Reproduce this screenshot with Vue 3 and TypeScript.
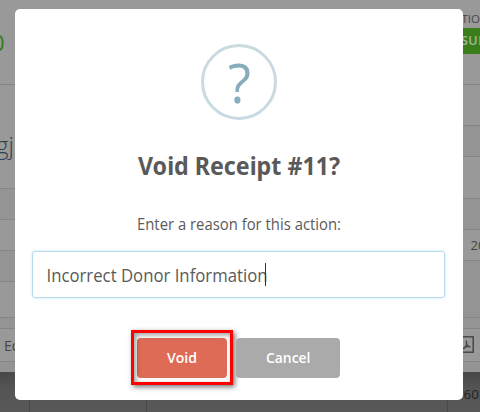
<script setup lang="ts">
import { ref } from 'vue'

interface Band { height: number; tone: string; text?: string; kind?: string }

const reason = ref('Incorrect Donor Information')

const leftBands: Band[] = [
  { height: 85, tone: 'plain', text: '0', kind: 'amount' },
  { height: 104, tone: 'plain', text: 'gj', kind: 'name' },
  { height: 31, tone: 'soft' },
  { height: 31, tone: 'plain' },
  { height: 31, tone: 'soft' },
  { height: 36, tone: 'plain' },
  { height: 11, tone: 'soft' },
  { height: 33, tone: 'plain', text: 'Ed', kind: 'edit' },
  { height: 10, tone: 'last' },
]

const rightBands: Band[] = [
  { height: 85, tone: 'plain', kind: 'status' },
  { height: 41, tone: 'plain' },
  { height: 31, tone: 'soft' },
  { height: 42, tone: 'plain' },
  { height: 31, tone: 'soft' },
  { height: 31, tone: 'plain', text: '20', kind: 'year' },
  { height: 57, tone: 'soft' },
  { height: 11, tone: 'soft' },
  { height: 33, tone: 'plain', kind: 'pdf' },
  { height: 10, tone: 'last' },
]
</script>

<template>
  <div class="screen">
    <div class="page">
      <div class="columns">
        <div class="column">
          <div v-for="(b, i) in leftBands" :key="i" class="band" :class="[b.tone, b.kind]" :style="{ height: b.height + 'px' }">
            <span v-if="b.text">{{ b.text }}</span>
          </div>
        </div>
        <div class="column right">
          <div v-for="(b, i) in rightBands" :key="i" class="band" :class="[b.tone, b.kind]" :style="{ height: b.height + 'px' }">
            <template v-if="b.kind === 'status'">
              <div class="caption">TIO</div>
              <div class="badge">SUB</div>
            </template>
            <svg v-else-if="b.kind === 'pdf'" class="pdf-icon" width="16" height="17" viewBox="0 0 16 17">
              <rect x=".8" y=".8" width="14.4" height="15.4" />
              <path d="M8.6 4.5c-.6 1 .1 3 0 4.200C8 10.500 6.500 12.300 5 12.600M8.600 8.700c.8 1.500 2 2.200 3.900 2.200M6.500 11.300l3.500-1" />
            </svg>
            <span v-else-if="b.text">{{ b.text }}</span>
          </div>
        </div>
      </div>
      <div class="footer">
        <div class="cell first"></div>
        <div class="cell second"></div>
        <div class="cell third"></div>
        <div class="cell total">60</div>
      </div>
    </div>

    <div class="modal" role="dialog">
      <div class="icon">
        <svg width="70" height="70"><text x="24" y="56" font-size="54" textLength="23" lengthAdjust="spacingAndGlyphs">?</text></svg>
      </div>
      <svg class="title" width="202" height="30"><text x="0" y="22" textLength="202" lengthAdjust="spacingAndGlyphs">Void Receipt #11?</text></svg>
      <svg class="message" width="204" height="22"><text x="0" y="16" textLength="204" lengthAdjust="spacingAndGlyphs">Enter a reason for this action:</text></svg>
      <div class="field">
        <svg width="219" height="27"><text x="-.5" y="21" textLength="221" lengthAdjust="spacingAndGlyphs">{{ reason }}</text></svg>
        <i class="caret"></i>
      </div>
      <div class="actions">
        <button class="btn void" type="button">
          <svg width="30" height="20"><text x="0" y="15" textLength="30" lengthAdjust="spacingAndGlyphs">Void</text></svg>
          <i class="highlight"></i>
        </button>
        <button class="btn cancel" type="button">
          <svg width="45" height="20"><text x="0" y="15" textLength="44.5" lengthAdjust="spacingAndGlyphs">Cancel</text></svg>
        </button>
      </div>
    </div>
  </div>
</template>

<style>
body { overflow: hidden; }
</style>

<style scoped>
* { box-sizing: border-box; }
.screen {
  position: relative;
  width: 480px;
  height: 412px;
  overflow: hidden;
  font-family: "Open Sans", "Noto Sans", sans-serif;
}
.page { width: 480px; }
.columns { display: grid; grid-template-columns: 455px 25px; background: #999; }
.column { overflow: hidden; height: 372px; }
.band { border-bottom: 1px solid #858585; white-space: nowrap; overflow: hidden; }
.plain { background: #999; }
.soft { background: #949494; }
.last { background: #949494; border: 0; }
.band span { display: block; }
.amount span { font: 400 22px/30px "Open Sans", sans-serif; color: #347b16; margin: 27px 0 0 -8px; }
.name span { font: 300 24px/32px "Open Sans", sans-serif; color: #354150; margin: 44px 0 0 -4px; }
.edit span { font-size: 14px; line-height: 20px; color: #454545; margin: 7px 0 0 4px; }
.year span { font-size: 13px; line-height: 20px; color: #454545; margin: 5px 0 0 15.5px; }
.caption { font-size: 11.5px; line-height: 16px; margin: 11px 0 0 6.5px; color: #484848; }
.badge { height: 26px; margin-top: 1px; padding-left: 6px; background: #3a7e1c; color: #a4b79b; font-size: 12.5px; font-weight: 600; line-height: 26px; letter-spacing: .5px; }
.pdf-icon { display: block; margin: 7px 0 0 3px; fill: none; stroke: #484848; stroke-width: 1.5; }
.footer {
  display: flex;
  height: 40px;
  background: linear-gradient(#484848, #555 18px, #585858);
}
.cell { border-right: 1px solid #494949; }
.first { width: 30px; }
.second { width: 117px; }
.third { width: 301px; }
.total { flex: 1; border: 0; padding: 11px 0 0 15.5px; font-size: 13.5px; line-height: 22px; color: #222; }

.modal {
  position: absolute;
  left: 15px;
  top: 9px;
  width: 448px;
  height: 391px;
  padding: 35px 18px 0 17px;
  display: flex;
  flex-direction: column;
  align-items: center;
  background: #fff;
  border-radius: 5px;
}
.modal svg { display: block; overflow: visible; flex: none; }
.icon { width: 76px; height: 76px; margin-left: 1px; border: 3px solid #c9dae1; border-radius: 50%; fill: #87adbd; font-family: "Open Sans", sans-serif; }
.title { margin: 33px 0 0 0; font: 700 24.5px "Noto Sans", sans-serif; fill: #595959; }
.message { margin: 31px 0 0; font-size: 15.5px; fill: #5a5a5a; }
.field {
  align-self: stretch;
  display: flex;
  align-items: center;
  height: 47px;
  margin-top: 15px;
  padding-left: 14px;
  border: 1px solid #b4dbed;
  border-radius: 3px;
  box-shadow: 0 0 3px #c4e6f5;
  font-size: 18px;
  fill: #5a5a5a;
}
.caret { width: 1px; height: 23px; margin-left: -1px; background: #333; }
.actions { display: flex; gap: 9px; margin-top: 40px; }
.btn { position: relative; display: flex; height: 40px; padding: 10px 30px; border: 0; border-radius: 4px; font: 600 14.5px "Open Sans", sans-serif; fill: #fff; }
.void { width: 90px; background: #de6b55; }
.cancel { width: 104px; background: #aaa; }
.highlight {
  position: absolute;
  left: -6px;
  top: -8px;
  width: 102px;
  height: 55px;
  border: 3px solid #f00;
  box-shadow: 2px 2px 5px rgba(0, 0, 0, .55), inset 2px 2px 5px rgba(0, 0, 0, .4);
}
</style>
